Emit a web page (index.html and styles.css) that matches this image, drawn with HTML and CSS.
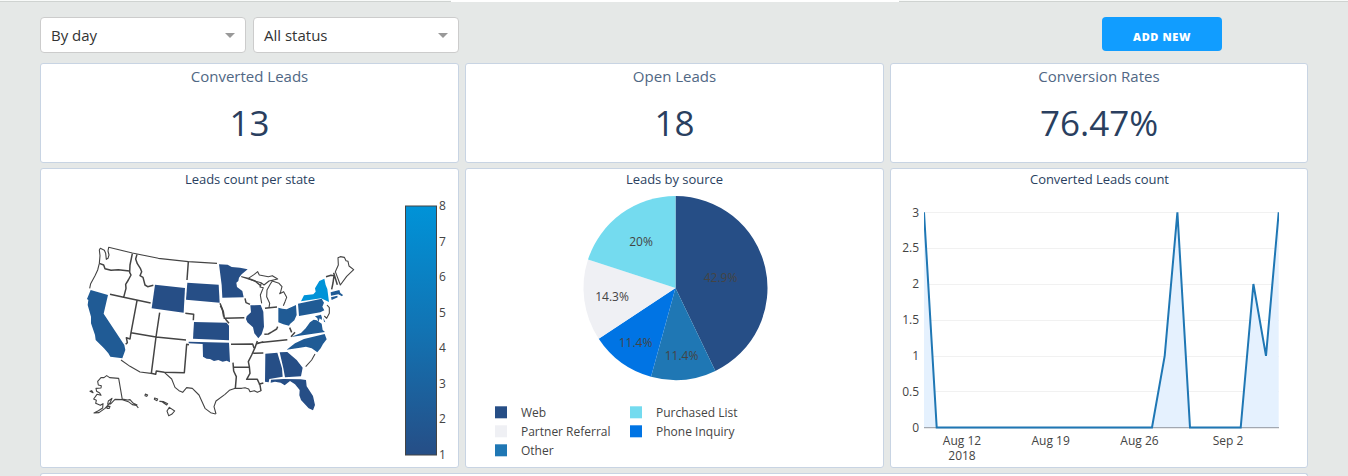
FILE: index.html
```html
<!DOCTYPE html>
<html lang="en">
<head>
<meta charset="utf-8">
<title>Leads dashboard</title>
<link rel="stylesheet" href="styles.css">
</head>
<body>
<nav class="tabs"><span class="tab"></span><span class="tab tab-active"></span><span class="tab"></span></nav>
<main class="page">
  <div class="toolbar">
    <div class="select"><span>By day</span><i class="caret"></i></div>
    <div class="select"><span>All status</span><i class="caret"></i></div>
    <button class="add">ADD NEW</button>
  </div>
  <section class="grid">
    <article class="card stat"><h2>Converted Leads</h2><p>13</p></article>
    <article class="card stat"><h2>Open Leads</h2><p>18</p></article>
    <article class="card stat"><h2>Conversion Rates</h2><p>76.47%</p></article>

    <article class="card">
      <svg class="chart" viewBox="41 169 417 298">
        <defs><linearGradient id="scale" x1="0" y1="0" x2="0" y2="1"><stop offset="0" stop-color="#0093d8"/><stop offset=".5" stop-color="#1273b3"/><stop offset="1" stop-color="#264e86"/></linearGradient></defs>
        <text class="title" x="250" y="184" textLength="130">Leads count per state</text>
        <!-- western states -->
        <g transform="translate(75 235) scale(.33333)">
          <path class="line" d="M73 85L75 62 73 45 76 40 88 46 92 55 94 73 99 70 102 60 99 48 101 37 172 54 250 70 340 80 426 85M73 85L68 105 60 122 47 146 44 160"/>
          <path class="line border" d="M73 85L86 90 90 101 108 106 130 104 163 108M172 56L165 90 164 112 168 120 160 135 152 148 153 160 146 187M105 178L146 187 227 204M186 58L182 72 187 86 196 100 200 110 195 122 204 127 210 150 218 155 235 151M340 80L336 135M186 197L168 293 165 312 154 308 157 323 152 328M254 233L243 306 229 415M168 293L243 306 333 315M331 235L356 238 355 256M435 205L442 222 446 245"/>
          <path class="low" d="M240 149L330 159 326 233 230 220Z"/>
          <path class="low" d="M337 143L431 149 434 203 333 194Z"/>
          <path class="low" d="M357 261L455 263 462 272 462 316 354 311Z"/>
          <path class="mid" d="M47 165L99 180 86 236 148 330 151 345 142 370 106 365 100 355 87 340 62 315 60 300 48 265 48 245 38 210 40 195 36 192Z"/>
        </g>
        <!-- northeastern states -->
        <g transform="translate(215 235) scale(.33333)">
          <path class="low" d="M12 88L38 89 50 96 75 98 98 103 80 118 72 128 70 138 64 143 66 156 82 168 86 187 22 188 20 150Z"/>
          <path class="low" d="M106 211L137 210 145 230 147 275 140 298 130 310 118 295 114 277 97 262 93 252 95 244 108 232Z"/>
          <path class="mid" d="M190 218L202 221 215 223 243 210 245 240 238 256 225 267 222 272 205 268 190 262Z"/>
          <path class="mid" d="M249 206L320 191 327 203 322 215 328 226 316 232 252 243Z"/>
          <path class="high" d="M258 199L267 181 295 178 302 170 300 160 313 138 328 131 332 150 337 162 342 201 318 190Z"/>
          <path class="mid" d="M228 306L258 294 272 280 285 262 296 254 305 256 320 266 323 285 330 291Z"/>
          <path class="mid" d="M347 172L373 165 376 174 384 180 381 184 370 178 348 182ZM348 187L367 182 368 187 350 195ZM300 244L318 239 321 248 320 255 314 250 310 262 307 250ZM325 248L331 262 327 260Z"/>
          <path class="line" d="M80 125L100 130 118 118 128 110 133 120 160 125 172 122 188 132 162 138 147 150 138 143 112 136ZM139 144L135 156 145 158 136 180 140 205M162 218L164 205 155 185 156 165 166 147 172 138 192 145 201 155 197 170 194 176 206 170 215 187 210 200 205 212M361 110L370 90 369 68 376 65 388 67 393 77 399 79 402 93 416 104 395 124 376 150ZM336 210L343 218 343 235 335 250 328 243"/>
          <path class="line border" d="M100 130L120 138 138 153M16 212L25 230 28 250 88 248M31 252L42 265M90 190L93 203 105 208M150 220L163 218 186 216M333 125L348 121 357 122 354 144 350 163M356 113L367 149M188 275L185 282 172 290 160 297 148 298M224 278L230 292M228 305L240 292"/>
        </g>
        <!-- southwest coast, Alaska and Hawaii -->
        <g transform="translate(75 325) scale(.33333)">
          <path class="line" d="M138 105L165 124 195 141 228 145M268 142L290 162 300 187 312 197 323 202 335 188 352 190 372 210 390 250 407 263 422 267"/>
          <path class="line border" d="M228 145L242 148 244 138 268 142 328 143 335 58 342 59"/>
          <path class="line" d="M142 224L131 160 104 158 95 152 87 158 78 158 68 169 70 180 79 182 78 189 63 190 65 199 74 204 78 211 66 208 56 222 64 226 62 235 76 241 84 236 83 249 70 257 57 264 72 263 90 250 105 234 111 220 100 228 98 237 107 237 120 223 142 224 160 230 172 239 184 241 190 249M142 222L158 225 165 224 175 235 187 240M96 244L105 244 103 250 96 250ZM45 199L54 203 50 197Z"/>
          <path class="line" d="M211 207L218 210 215 214 210 212ZM239 219L248 222 246 227 238 223ZM254 229L266 230 278 236 275 240 262 231ZM283 247L299 258 290 268 281 272 276 258Z"/>
        </g>
        <!-- southern states -->
        <g transform="translate(200 325) scale(.33333)">
          <path class="low" d="M-34 50L87 53 90 112 80 107 68 110 55 105 42 108 30 102 20 101 9 95 8 57-34 55Z"/>
          <path class="mid" d="M260 74L285 55 312 42 374 27 380 43 369 57 362 70 352 82 335 70 318 65 300 68Z"/>
          <path class="low" d="M196 86L232 83 246 130 248 155 208 162 206 172 195 170Z"/>
          <path class="low" d="M239 82L262 81 290 105 308 128 303 154 255 157 250 130Z"/>
          <path class="low" d="M213 164L250 162 302 163 318 165 320 184 339 213 345 240 339 256 326 250 303 225 298 211 299 195 285 178 270 168 254 181 242 173 225 170 212 173Z"/>
          <path class="line" d="M48 267L42 245 48 228 75 208 88 196 106 190 125 190 135 188 146 192 150 200 163 197 172 202 183 197M317 125L335 105 345 87"/>
          <path class="line border" d="M93 58L158 57 162 69M175 53L262 44M160 85L190 84M172 48L165 68 155 90 145 110 148 125 150 145 140 163 172 163 180 180 183 198M100 127L148 127M99 113L101 138 109 155 106 190M176 178L190 174M170 56L190 50"/>
        </g>
        <rect x="405.5" y="206" width="31" height="249" fill="url(#scale)" stroke="#444"/>
        <g class="label"><text x="439" y="210">8</text><text x="439" y="246">7</text><text x="439" y="281">6</text><text x="439" y="317">5</text><text x="439" y="352">4</text><text x="439" y="388">3</text><text x="439" y="423">2</text><text x="439" y="459">1</text></g>
      </svg>
    </article>

    <article class="card">
      <svg class="chart" viewBox="466 169 417 298">
        <text class="title" x="674.5" y="184" textLength="97">Leads by source</text>
        <path fill="#264e86" d="M675.5 288V196A92 92 0 0 1 715.4 370.9Z"/>
        <path fill="#1f77b4" d="M675.5 288L715.4 370.9A92 92 0 0 1 651 376.7Z"/>
        <path fill="#0074e4" d="M675.5 288L651 376.7A92 92 0 0 1 598.7 338.7Z"/>
        <path fill="#eff0f4" d="M675.5 288L598.7 338.7A92 92 0 0 1 588 259.6Z"/>
        <path fill="#74dbef" d="M675.5 288L588 259.6A92 92 0 0 1 675.5 196Z"/>
        <g class="label mid-label"><text x="641" y="246">20%</text><text x="720.5" y="282">42.9%</text><text x="612" y="301">14.3%</text><text x="635.5" y="347">11.4%</text><text x="681.5" y="360">11.4%</text></g>
        <rect fill="#264e86" x="495" y="406.3" width="12" height="12"/><rect fill="#eff0f4" x="495" y="425.3" width="12" height="12"/><rect fill="#1f77b4" x="495" y="444.3" width="12" height="12"/>
        <rect fill="#74dbef" x="630" y="406.3" width="12" height="12"/><rect fill="#0074e4" x="630" y="425.3" width="12" height="12"/>
        <g class="label"><text x="521" y="417">Web</text><text x="521" y="436" textLength="89.5">Partner Referral</text><text x="521" y="455">Other</text><text x="656" y="417" textLength="81.5">Purchased List</text><text x="656" y="436" textLength="78.5">Phone Inquiry</text></g>
      </svg>
    </article>

    <article class="card">
      <svg class="chart" viewBox="891 169 416 298">
        <text class="title" x="1099.5" y="184" textLength="139">Converted Leads count</text>
        <path stroke="#f1f1f1" d="M924 212.5H1279M924 248.5H1279M924 284.5H1279M924 320.5H1279M924 356.5H1279M924 391.5H1279"/>
        <path fill="#e5f1fe" d="M924 212.3L936.7 427.5H1152L1164.7 355.8 1177.4 212.3 1190 427.5H1240.7L1253.4 284 1266 355.8 1278.7 212.3V427.5H924Z"/>
        <path stroke="#a2a8b1" stroke-width="1.3" d="M924 427.7H1279"/>
        <clipPath id="plot"><rect x="924" y="212" width="355" height="217"/></clipPath>
        <path clip-path="url(#plot)" fill="none" stroke="#1f77b4" stroke-width="2" d="M924 212.3L936.7 427.5H1152L1164.7 355.8 1177.4 212.3 1190 427.5H1240.7L1253.4 284 1266 355.8 1278.7 212.3"/>
        <g class="label end-label"><text x="919" y="217">3</text><text x="919" y="252">2.5</text><text x="919" y="288">2</text><text x="919" y="324">1.5</text><text x="919" y="360">1</text><text x="919" y="396">0.5</text><text x="919" y="432">0</text></g>
        <g class="label mid-label"><text x="962" y="445">Aug 12</text><text x="962" y="460">2018</text><text x="1050.7" y="445">Aug 19</text><text x="1139.5" y="445">Aug 26</text><text x="1228" y="445">Sep 2</text></g>
      </svg>
    </article>
    <article class="card wide"></article>
  </section>
</main>
</body>
</html>
```
FILE: styles.css
```css
* { box-sizing: border-box; }
body { margin: 0; background: #e5e8e7; font-family: "Open Sans", "Noto Sans", sans-serif; }
.tabs { display: grid; grid-template-columns: 451px 448px 1fr; height: 2px; }
.tab { background: #f8faf9; border-bottom: 1px solid #cfd3d1; }
.tab-active { background: #fff; border-bottom: 0; }
.page { width: 1268px; margin-left: 40px; padding-top: 15px; }
.toolbar { display: flex; gap: 7px; height: 46px; align-items: flex-start; }
.select { display: flex; align-items: center; justify-content: space-between; width: 206px; height: 36px; padding: 0 10px; background: #fff; border: 1px solid #ccc; border-radius: 4px; color: #333; font-size: 15px; }
.caret { border: 5px solid transparent; border-top-color: #999; border-bottom: 0; }
.add { width: 120px; height: 34px; margin-left: auto; margin-right: 86px; padding: 5px 0 0; border: 0; border-radius: 4px; background: #119dff; color: #fff; font: 800 11px "Open Sans", sans-serif; letter-spacing: .6px; }
.grid { display: grid; grid-template-columns: 419px 419px 418px; grid-template-rows: 100px 300px 3px; gap: 5px 6px; }
.card { background: #fff; border: 1px solid #c8d4e3; border-radius: 3px; overflow: hidden; }
.wide { grid-column: 1 / -1; border-bottom: 0; border-radius: 3px 3px 0 0; }
.stat { text-align: center; }
.stat h2 { margin: 2px 0 0; font-size: 15px; line-height: 20px; font-weight: 400; color: #506784; }
.stat p { margin: 13px 0 0; font-size: 35px; line-height: 48px; color: #2a3f5f; }
.chart { display: block; width: 100%; height: 100%; }
.title { font-size: 13px; fill: #2a3f5f; text-anchor: middle; }
.label { font-size: 12px; fill: #444; }
.mid-label { text-anchor: middle; }
.end-label { text-anchor: end; }
.line { fill: none; stroke: #444; stroke-width: 3.3; stroke-linejoin: round; }
.border { stroke-width: 4.5; }
.low { fill: #264e86; }
.mid { fill: #205b95; }
.high { fill: #0093d8; }
```
